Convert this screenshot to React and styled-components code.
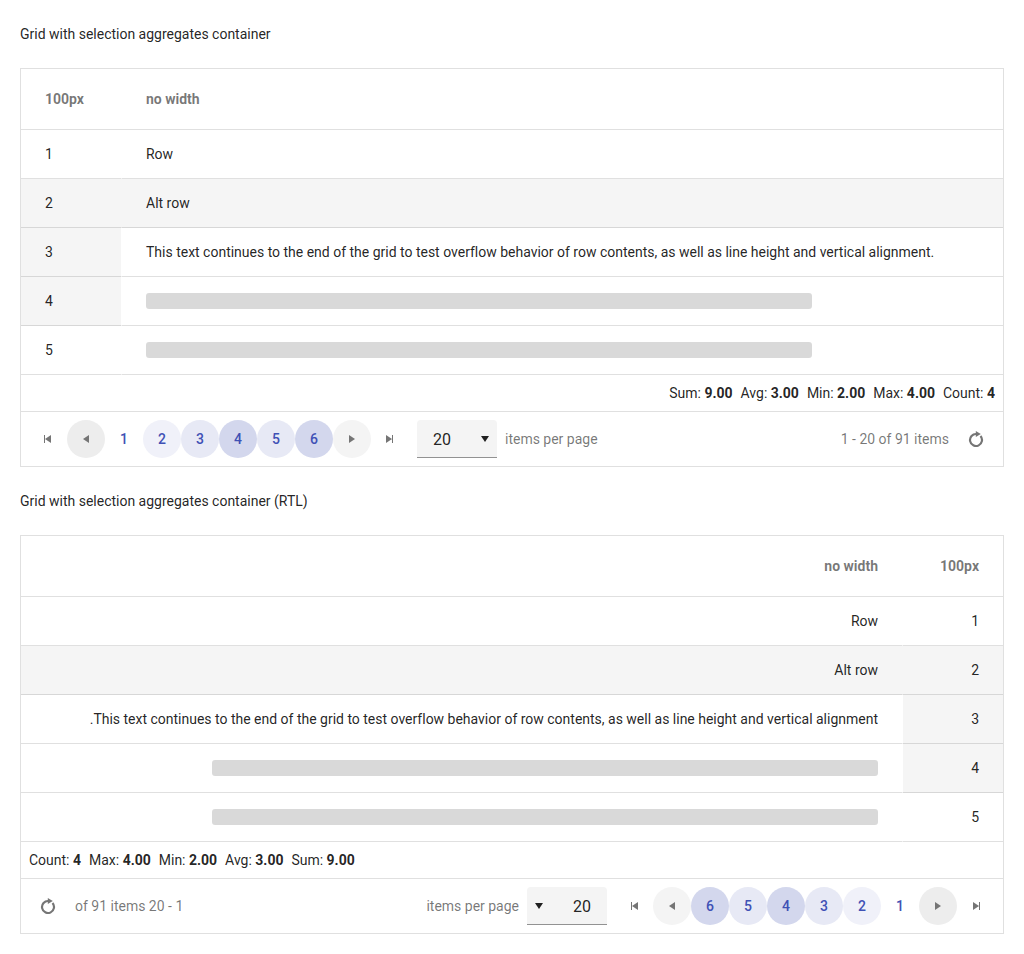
import React from "react";
import styled, { createGlobalStyle } from "styled-components";

const Global = createGlobalStyle`
  *, *::before, *::after { box-sizing: border-box; }
  body {
    margin: 0;
    background: #fff;
    color: rgba(0, 0, 0, 0.87);
    font-family: Roboto, "Liberation Sans", sans-serif;
    font-size: 14px;
    line-height: 20px;
    letter-spacing: -0.006px;
  }
`;

const Page = styled.main`
  display: flex;
  flex-direction: column;
  gap: 24px;
  padding: 24px 20px 20px;
`;

const Title = styled.div`
  height: 20px;
`;

const Grid = styled.section`
  display: flex;
  flex-direction: column;
  border: 1px solid rgba(0, 0, 0, 0.12);
`;

const Row = styled.div`
  display: grid;
  grid-template-columns: 100px minmax(0, 1fr);
  height: ${(p) => (p.$header ? 61 : 49)}px;
  color: ${(p) => (p.$header ? "rgba(0, 0, 0, 0.54)" : "inherit")};
  font-weight: ${(p) => (p.$header ? 700 : 400)};
  background: ${(p) => (p.$selected ? "rgba(0, 0, 0, 0.04)" : "transparent")};
`;

const Cell = styled.div`
  display: flex;
  align-items: center;
  padding: 0 24px;
  white-space: nowrap;
  border: 0 solid transparent;
  border-bottom: 1px solid rgba(0, 0, 0, 0.12);
  border-inline-start-width: ${(p) => (p.$first ? 0 : 1)}px;
  background: ${(p) => (p.$selected ? "rgba(0, 0, 0, 0.04)" : "transparent")};
`;

const HeaderCell = styled(Cell)`
  border-inline-start-width: 0;
  padding-inline-start: ${(p) => (p.$first ? 24 : 25)}px;
`;

const Skeleton = styled.span`
  width: 80%;
  height: 16px;
  border-radius: 3px;
  background: rgba(0, 0, 0, 0.15);
`;

const Aggregates = styled.div`
  display: flex;
  justify-content: flex-end;
  gap: 8px;
  height: 36px;
  padding: 8px;
`;

const Pager = styled.nav`
  display: flex;
  align-items: center;
  height: 55px;
  padding: 8px;
  border-top: 1px solid rgba(0, 0, 0, 0.12);
  color: rgba(0, 0, 0, 0.54);
`;

const PageButton = styled.button`
  display: flex;
  align-items: center;
  justify-content: center;
  flex: none;
  width: 38px;
  height: 38px;
  padding: 0;
  border: 0;
  border-radius: 50%;
  font: 500 14px/20px Roboto, "Liberation Sans", sans-serif;
  color: ${(p) => (p.$icon ? "#757575" : "#3f51b5")};
  background: ${(p) => p.$fill || "transparent"};
`;

const Dropdown = styled.div`
  display: flex;
  align-items: center;
  justify-content: space-between;
  width: 80px;
  height: 38px;
  margin: 0 8px;
  padding-inline: 16px 4px;
  border-bottom: 1px solid #929292;
  border-radius: 4px 4px 0 0;
  background: #f4f4f4;
  color: rgba(0, 0, 0, 0.87);
  font-size: 16px;
`;

const DropdownValue = styled.span`
  padding-top: 2px;
`;

const Info = styled.span`
  margin-inline-start: auto;
  margin-inline-end: 8px;
`;

const Svg = styled.svg`
  display: block;
  width: 16px;
  height: 16px;
  fill: currentColor;
  transform: ${(p) => (p.$flip ? "scaleX(-1)" : "none")};
`;

const shapes = {
  previous: <path d="M11 4v8L5 8z" />,
  next: <path d="M5 4v8l6-4z" />,
  first: <path d="M4 4h1v8H4zM11 4v8L5 8z" />,
  last: <path d="M4 4v8l6-4zM10 4h1v8h-1z" />,
  down: <path d="M4 5h8l-4 6z" />,
  refresh: (
    <>
      <path d="M12.5 5A6 6 0 1 1 8.5 3" fill="none" stroke="currentColor" strokeWidth="2.2" />
      <path d="M7.8 0l5 3-5 3z" />
    </>
  ),
};

const Icon = ({ name, flip }) => (
  <Svg viewBox="0 0 16 16" $flip={flip} aria-hidden="true">
    {shapes[name]}
  </Svg>
);

const longText =
  "This text continues to the end of the grid to test overflow behavior of row contents, as well as line height and vertical alignment.";

const rows = [
  { id: 1, content: "Row" },
  { id: 2, content: "Alt row", selected: true },
  { id: 3, content: longText, cellSelected: true },
  { id: 4, content: <Skeleton />, cellSelected: true },
  { id: 5, content: <Skeleton /> },
];

const aggregates = [
  ["Sum", "9.00"],
  ["Avg", "3.00"],
  ["Min", "2.00"],
  ["Max", "4.00"],
  ["Count", "4"],
];

const pages = [
  [1],
  [2, "#f0f1f9"],
  [3, "#e7e9f5"],
  [4, "#d3d7ed"],
  [5, "#e7e9f5"],
  [6, "#d3d7ed"],
];

function DataGrid({ dir }) {
  const flip = dir === "rtl";
  return (
    <Grid dir={dir}>
      <Row $header>
        <HeaderCell $first>100px</HeaderCell>
        <HeaderCell>no width</HeaderCell>
      </Row>
      {rows.map((row) => (
        <Row key={row.id} $selected={row.selected}>
          <Cell $first $selected={row.cellSelected}>{row.id}</Cell>
          <Cell>{row.content}</Cell>
        </Row>
      ))}
      <Aggregates>
        {aggregates.map(([label, value]) => (
          <span key={label}>
            {label}: <b>{value}</b>
          </span>
        ))}
      </Aggregates>
      <Pager>
        <PageButton $icon aria-label="First page"><Icon name="first" flip={flip} /></PageButton>
        <PageButton $icon $fill="#ededed" aria-label="Previous page"><Icon name="previous" flip={flip} /></PageButton>
        {pages.map(([page, fill]) => (
          <PageButton key={page} $fill={fill}>{page}</PageButton>
        ))}
        <PageButton $icon $fill="#f4f4f4" aria-label="Next page"><Icon name="next" flip={flip} /></PageButton>
        <PageButton $icon aria-label="Last page"><Icon name="last" flip={flip} /></PageButton>
        <Dropdown>
          <DropdownValue>20</DropdownValue>
          <Icon name="down" />
        </Dropdown>
        <span>items per page</span>
        <Info>1 - 20 of 91 items</Info>
        <PageButton $icon aria-label="Refresh"><Icon name="refresh" /></PageButton>
      </Pager>
    </Grid>
  );
}

export default function App() {
  return (
    <>
      <Global />
      <Page>
        <Title>Grid with selection aggregates container</Title>
        <DataGrid dir="ltr" />
        <Title>Grid with selection aggregates container (RTL)</Title>
        <DataGrid dir="rtl" />
      </Page>
    </>
  );
}
